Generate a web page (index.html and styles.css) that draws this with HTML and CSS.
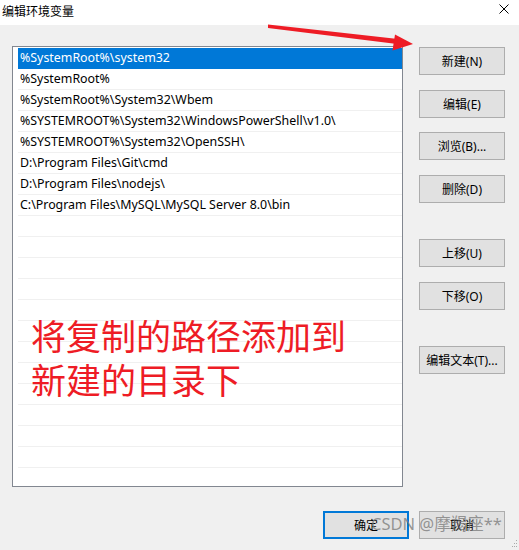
FILE: index.html
```html
<!DOCTYPE html>
<html lang="zh-CN">
<head>
<meta charset="utf-8">
<title>编辑环境变量</title>
<link rel="stylesheet" href="styles.css">
</head>
<body>
<div class="window">
  <div class="titlebar">
    <span class="title">编辑环境变量</span>
    <svg class="close" width="10" height="10" viewBox="0 0 10 10"><path d="M0.5 0.5 L9.5 9.5 M9.5 0.5 L0.5 9.5" stroke="#000" stroke-width="1" fill="none"/></svg>
  </div>
  <div class="content">
    <div class="list">
      <div class="row selected">%SystemRoot%\system32</div>
      <div class="row">%SystemRoot%</div>
      <div class="row">%SystemRoot%\System32\Wbem</div>
      <div class="row">%SYSTEMROOT%\System32\WindowsPowerShell\v1.0\</div>
      <div class="row">%SYSTEMROOT%\System32\OpenSSH\</div>
      <div class="row">D:\Program Files\Git\cmd</div>
      <div class="row">D:\Program Files\nodejs\</div>
      <div class="row">C:\Program Files\MySQL\MySQL Server 8.0\bin</div>
      <div class="row"></div>
      <div class="row"></div>
      <div class="row"></div>
      <div class="row"></div>
      <div class="row"></div>
      <div class="row"></div>
      <div class="row"></div>
      <div class="row"></div>
      <div class="row"></div>
      <div class="row"></div>
      <div class="row"></div>
      <div class="row"></div>
      <div class="row"></div>
    </div>
    <div class="side">
      <button class="btn b-new">新建(N)</button>
      <button class="btn b-edit">编辑(E)</button>
      <button class="btn b-browse">浏览(B)...</button>
      <button class="btn b-del">删除(D)</button>
      <button class="btn b-up">上移(U)</button>
      <button class="btn b-down">下移(O)</button>
      <button class="btn b-text">编辑文本(T)...</button>
    </div>
  </div>
  <div class="footer">
    <button class="btn primary">确定</button>
    <button class="btn">取消</button>
  </div>

  <div class="note">将复制的路径添加到<br>新建的目录下</div>
  <svg class="arrow" width="519" height="60" viewBox="0 0 519 60">
    <polygon fill="#ee1c25" points="268,24.5 398,39 397,44 268,28"/>
    <polygon fill="#ee1c25" points="413,44 395,34.5 392.5,50.5"/>
  </svg>
  <div class="watermark">CSDN @摩羯座**</div>
  <svg class="grip" width="6" height="8" viewBox="0 0 6 8">
    <rect x="4" y="0" width="1" height="1" fill="#aaa"/>
    <rect x="2" y="3" width="1" height="1" fill="#aaa"/>
    <rect x="4" y="3" width="1" height="1" fill="#aaa"/>
    <rect x="0" y="6" width="1" height="1" fill="#aaa"/>
    <rect x="2" y="6" width="1" height="1" fill="#aaa"/>
    <rect x="4" y="6" width="1" height="1" fill="#aaa"/>
  </svg>
</div>
</body>
</html>
```
FILE: styles.css
```css
html, body {
  margin: 0;
  padding: 0;
}
body {
  background: #f0f0f0;
  font-family: "Noto Sans", "Noto Sans CJK SC", sans-serif;
  font-size: 12px;
  color: #000;
}
.window {
  position: relative;
  width: 519px;
  height: 550px;
  overflow: hidden;
}
.titlebar {
  height: 25px;
  background: #fff;
  display: flex;
  align-items: flex-start;
  justify-content: space-between;
  padding: 0 10px 0 2px;
  box-sizing: border-box;
}
.title {
  font-family: "Noto Sans CJK SC", sans-serif;
  font-size: 12px;
  line-height: 20px;
  margin-top: 1px;
}
.close {
  margin-top: 4px;
}
.content {
  display: flex;
  padding: 21px 0 0 12px;
  gap: 16px;
}
.list {
  width: 391px;
  height: 441px;
  box-sizing: border-box;
  border: 1px solid #828790;
  background: #fff;
  padding: 1px 0 0 5px;
  overflow: hidden;
}
.row {
  height: 21px;
  box-sizing: border-box;
  border-bottom: 1px solid #f0f0f0;
  padding-left: 2px;
  line-height: 20px;
  white-space: nowrap;
  font-family: "Noto Sans", "Noto Sans CJK SC", sans-serif;
  font-size: 12.4px;
  color: #000;
}
.row.selected {
  background: #0078d7;
  color: #fff;
  border-bottom-color: #0078d7;
}
.side {
  display: flex;
  flex-direction: column;
  align-items: flex-start;
  padding-top: 1px;
}
.btn {
  width: 86px;
  height: 28px;
  box-sizing: border-box;
  background: #e1e1e1;
  border: 1px solid #adadad;
  font-family: "Noto Sans", "Noto Sans CJK SC", sans-serif;
  font-size: 12px;
  color: #000;
  padding: 0;
  margin: 0;
}
.b-edit, .b-del, .b-down { margin-top: 15px; }
.b-browse { margin-top: 14px; }
.b-up, .b-text { margin-top: 36px; }
.footer {
  display: flex;
  justify-content: flex-end;
  gap: 10px;
  padding: 24px 14px 0 0;
}
.btn.primary {
  border: 2px solid #0078d7;
}
.note {
  position: absolute;
  left: 31px;
  top: 313px;
  font-family: "Noto Sans CJK SC", sans-serif;
  font-size: 35px;
  line-height: 44px;
  color: #ee1c25;
}
.arrow {
  position: absolute;
  left: 0;
  top: 0;
}
.watermark {
  position: absolute;
  left: 371px;
  top: 513px;
  font-family: "Noto Sans", "Noto Sans CJK SC", sans-serif;
  font-size: 16.5px;
  line-height: 22px;
  color: rgba(120, 120, 120, 0.75);
  white-space: nowrap;
}
.grip {
  position: absolute;
  left: 512px;
  top: 540px;
}
```
